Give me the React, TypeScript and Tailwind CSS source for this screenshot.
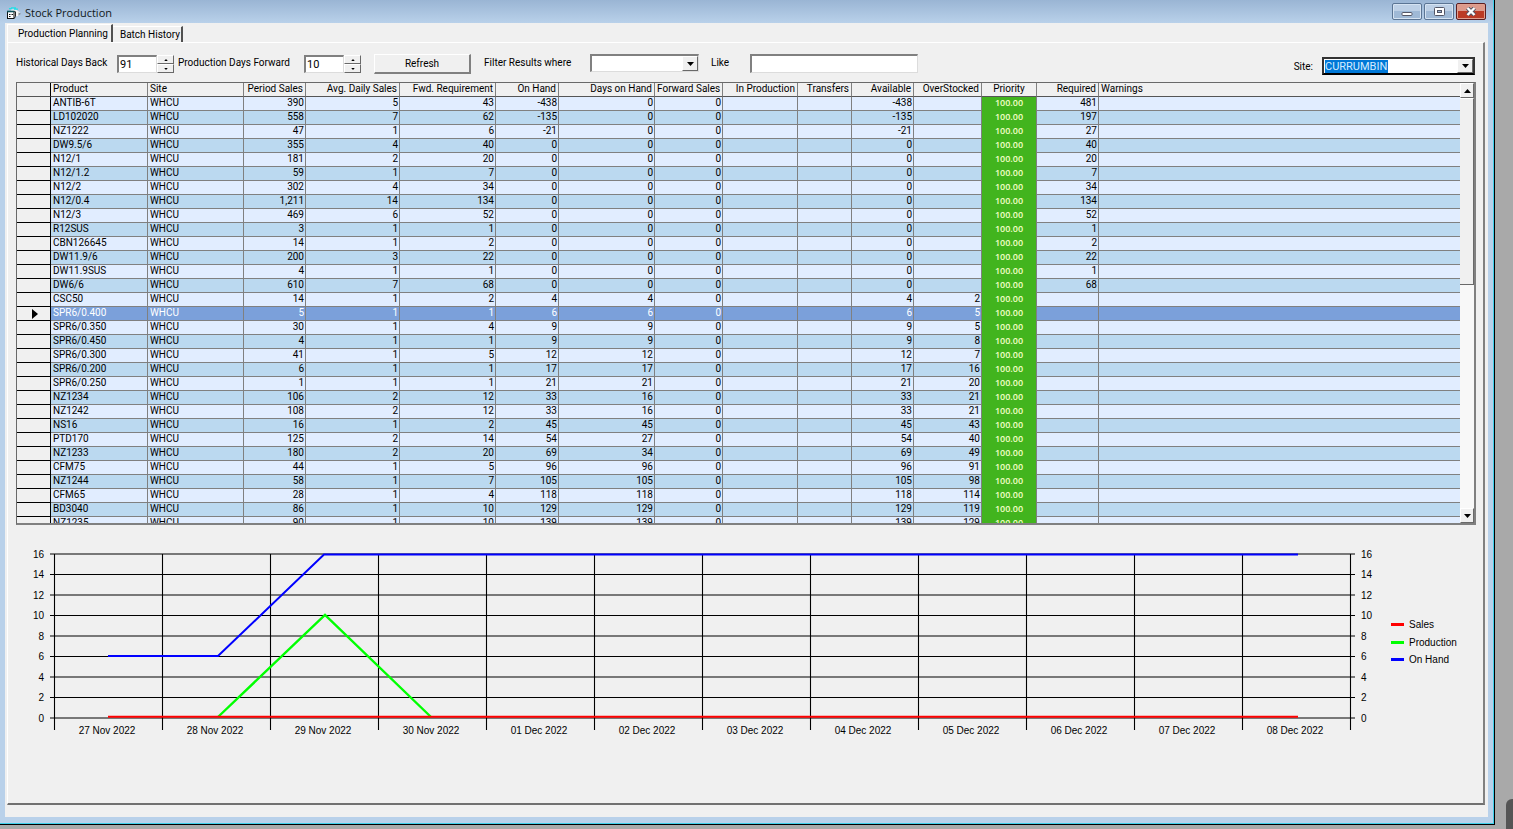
import React, { useState } from 'react';

interface StockRow {
  product: string;
  period: string;
  avg: number;
  fwd: number;
  onHand: number;
  days: number;
  available: number;
  over?: number;
  required?: number;
}

const ROWS: StockRow[] = [
  { product: 'ANTIB-6T', period: '390', avg: 5, fwd: 43, onHand: -438, days: 0, available: -438, required: 481 },
  { product: 'LD102020', period: '558', avg: 7, fwd: 62, onHand: -135, days: 0, available: -135, required: 197 },
  { product: 'NZ1222', period: '47', avg: 1, fwd: 6, onHand: -21, days: 0, available: -21, required: 27 },
  { product: 'DW9.5/6', period: '355', avg: 4, fwd: 40, onHand: 0, days: 0, available: 0, required: 40 },
  { product: 'N12/1', period: '181', avg: 2, fwd: 20, onHand: 0, days: 0, available: 0, required: 20 },
  { product: 'N12/1.2', period: '59', avg: 1, fwd: 7, onHand: 0, days: 0, available: 0, required: 7 },
  { product: 'N12/2', period: '302', avg: 4, fwd: 34, onHand: 0, days: 0, available: 0, required: 34 },
  { product: 'N12/0.4', period: '1,211', avg: 14, fwd: 134, onHand: 0, days: 0, available: 0, required: 134 },
  { product: 'N12/3', period: '469', avg: 6, fwd: 52, onHand: 0, days: 0, available: 0, required: 52 },
  { product: 'R12SUS', period: '3', avg: 1, fwd: 1, onHand: 0, days: 0, available: 0, required: 1 },
  { product: 'CBN126645', period: '14', avg: 1, fwd: 2, onHand: 0, days: 0, available: 0, required: 2 },
  { product: 'DW11.9/6', period: '200', avg: 3, fwd: 22, onHand: 0, days: 0, available: 0, required: 22 },
  { product: 'DW11.9SUS', period: '4', avg: 1, fwd: 1, onHand: 0, days: 0, available: 0, required: 1 },
  { product: 'DW6/6', period: '610', avg: 7, fwd: 68, onHand: 0, days: 0, available: 0, required: 68 },
  { product: 'CSC50', period: '14', avg: 1, fwd: 2, onHand: 4, days: 4, available: 4, over: 2 },
  { product: 'SPR6/0.400', period: '5', avg: 1, fwd: 1, onHand: 6, days: 6, available: 6, over: 5 },
  { product: 'SPR6/0.350', period: '30', avg: 1, fwd: 4, onHand: 9, days: 9, available: 9, over: 5 },
  { product: 'SPR6/0.450', period: '4', avg: 1, fwd: 1, onHand: 9, days: 9, available: 9, over: 8 },
  { product: 'SPR6/0.300', period: '41', avg: 1, fwd: 5, onHand: 12, days: 12, available: 12, over: 7 },
  { product: 'SPR6/0.200', period: '6', avg: 1, fwd: 1, onHand: 17, days: 17, available: 17, over: 16 },
  { product: 'SPR6/0.250', period: '1', avg: 1, fwd: 1, onHand: 21, days: 21, available: 21, over: 20 },
  { product: 'NZ1234', period: '106', avg: 2, fwd: 12, onHand: 33, days: 16, available: 33, over: 21 },
  { product: 'NZ1242', period: '108', avg: 2, fwd: 12, onHand: 33, days: 16, available: 33, over: 21 },
  { product: 'NS16', period: '16', avg: 1, fwd: 2, onHand: 45, days: 45, available: 45, over: 43 },
  { product: 'PTD170', period: '125', avg: 2, fwd: 14, onHand: 54, days: 27, available: 54, over: 40 },
  { product: 'NZ1233', period: '180', avg: 2, fwd: 20, onHand: 69, days: 34, available: 69, over: 49 },
  { product: 'CFM75', period: '44', avg: 1, fwd: 5, onHand: 96, days: 96, available: 96, over: 91 },
  { product: 'NZ1244', period: '58', avg: 1, fwd: 7, onHand: 105, days: 105, available: 105, over: 98 },
  { product: 'CFM65', period: '28', avg: 1, fwd: 4, onHand: 118, days: 118, available: 118, over: 114 },
  { product: 'BD3040', period: '86', avg: 1, fwd: 10, onHand: 129, days: 129, available: 129, over: 119 },
  { product: 'NZ1235', period: '90', avg: 1, fwd: 10, onHand: 139, days: 139, available: 139, over: 129 },
];

const COLUMNS = [
  { label: '', width: 'w-[34px]', align: 'text-left' },
  { label: 'Product', width: 'w-[97px]', align: 'text-left' },
  { label: 'Site', width: 'w-24', align: 'text-left' },
  { label: 'Period Sales', width: 'w-[62px]', align: 'text-right' },
  { label: 'Avg. Daily Sales', width: 'w-[94px]', align: 'text-right' },
  { label: 'Fwd. Requirement', width: 'w-24', align: 'text-right' },
  { label: 'On Hand', width: 'w-[63px]', align: 'text-right' },
  { label: 'Days on Hand', width: 'w-24', align: 'text-right' },
  { label: 'Forward Sales', width: 'w-[68px]', align: 'text-right' },
  { label: 'In Production', width: 'w-[75px]', align: 'text-right' },
  { label: 'Transfers', width: 'w-[54px]', align: 'text-right' },
  { label: 'Available', width: 'w-[62px]', align: 'text-right' },
  { label: 'OverStocked', width: 'w-[68px]', align: 'text-right' },
  { label: 'Priority', width: 'w-[55px]', align: 'text-center' },
  { label: 'Required', width: 'w-[62px]', align: 'text-right' },
  { label: 'Warnings', width: '', align: 'text-left' },
];

const DATES = [
  '27 Nov 2022', '28 Nov 2022', '29 Nov 2022', '30 Nov 2022', '01 Dec 2022', '02 Dec 2022',
  '03 Dec 2022', '04 Dec 2022', '05 Dec 2022', '06 Dec 2022', '07 Dec 2022', '08 Dec 2022',
];

const LEGEND = [
  { label: 'Sales', color: '#ff0000', y: 85 },
  { label: 'Production', color: '#00ff00', y: 103 },
  { label: 'On Hand', color: '#0000ff', y: 120 },
];

const raised = 'bg-[#f0f0f0] border border-t-white border-l-white border-r-[#696969] border-b-[#696969]';
const sunken = 'bg-white border-t-2 border-l-2 border-r border-b border-t-[#808080] border-l-[#808080] border-r-[#dcdcdc] border-b-[#dcdcdc]';

const Arrow = ({ up = false, className = 'w-[7px] h-1' }: { up?: boolean; className?: string }) => (
  <svg viewBox="0 0 7 4" className={className} aria-hidden="true">
    <path d={up ? 'M0 4L3.5 0L7 4Z' : 'M0 0L3.5 4L7 0Z'} fill="#000" />
  </svg>
);

const TitleBar = () => (
  <header className="flex h-[23px] shrink-0 items-start justify-between bg-linear-to-b from-[#9ab5d4] to-[#b9d1ea] pt-[3px] pr-[7px] pl-[6px]">
    <div className="flex items-center gap-1 pt-[2px]">
      <svg viewBox="0 0 15 13" className="h-[13px] w-[15px]" aria-hidden="true">
        <path d="M5 2.5L10 2.5L14 5.5L12 9L6 10Z" fill="#f4f4f4" />
        <path d="M3 1.7H6M5 .9H10M8 2.2H12" stroke="#20e0e8" strokeWidth="1.3" />
        <path d="M12.5 5.5L15 6.8L12.5 8.5Z" fill="#8a8f96" />
        <rect x="1.5" y="4.5" width="6.5" height="7" fill="#fff" stroke="#111" />
        <path d="M1 4.5H8.5" stroke="#0b4f57" strokeWidth="1.6" />
        <path d="M3 7.5H4.5M5.5 7.5H7M3 9.5H4.5" stroke="#111" />
        <path d="M8.5 4L9.5 5V9.5L8.5 11" fill="none" stroke="#222" />
      </svg>
      <h1 className="font-['Open_Sans',sans-serif] text-[11px] leading-4 text-[#101820]">Stock Production</h1>
    </div>
    <div className="flex gap-[2px]">
      <button type="button" aria-label="Minimize" className="flex h-[17px] w-[30px] items-center justify-center rounded-xs border border-[#5b7594] bg-linear-to-b from-[#bdd0e6] from-50% to-[#9fb9d6] to-50% shadow-[inset_0_0_0_1px_#d5e3f2]">
        <svg viewBox="0 0 12 6" className="mt-1 h-[6px] w-3"><rect x="1" y="1.5" width="10" height="3" rx="1" fill="#fff" stroke="#535666" /></svg>
      </button>
      <button type="button" aria-label="Maximize" className="flex h-[17px] w-[30px] items-center justify-center rounded-xs border border-[#5b7594] bg-linear-to-b from-[#bdd0e6] from-50% to-[#9fb9d6] to-50% shadow-[inset_0_0_0_1px_#d5e3f2]">
        <svg viewBox="0 0 11 9" className="h-[9px] w-[11px]">
          <rect x=".5" y=".5" width="10" height="8" rx="1" fill="#fff" stroke="#535666" />
          <rect x="3.5" y="3.5" width="4" height="2" fill="#9fb9d6" stroke="#535666" />
        </svg>
      </button>
      <button type="button" aria-label="Close" className="flex h-[17px] w-[30px] items-center justify-center rounded-xs border border-[#5c1f22] bg-linear-to-b from-[#dd9a8c] from-50% to-[#bb3b25] to-50% shadow-[inset_0_0_0_1px_#e0a090]">
        <svg viewBox="0 0 12 9" className="h-[9px] w-3">
          <path d="M2.5 1L9.5 8M9.5 1L2.5 8" stroke="#535666" strokeWidth="4.2" />
          <path d="M2.5 1L9.5 8M9.5 1L2.5 8" stroke="#fff" strokeWidth="2.4" />
        </svg>
      </button>
    </div>
  </header>
);

interface SpinBoxProps {
  id: string;
  label: string;
  labelWidth: string;
  initial: number;
}

const SpinBox: React.FC<SpinBoxProps> = ({ id, label, labelWidth, initial }) => {
  const [value, setValue] = useState(initial);

  return (
    <div className="flex items-start">
      <label htmlFor={id} className={`${labelWidth} leading-[18px]`}>{label}</label>
      <div className="flex pt-px">
        <input
          id={id}
          value={value}
          onChange={(e) => setValue(Number(e.target.value) || 0)}
          className={`${sunken} h-[18px] w-10 px-px text-[11px]`}
        />
        <div className="flex w-[17px] flex-col">
          <button type="button" aria-label={`Increase ${label}`} onClick={() => setValue(value + 1)} className={`${raised} flex h-[9px] items-center justify-center`}>
            <Arrow up className="h-[2px] w-1" />
          </button>
          <button type="button" aria-label={`Decrease ${label}`} onClick={() => setValue(value - 1)} className={`${raised} flex h-[9px] items-center justify-center`}>
            <Arrow className="h-[2px] w-1" />
          </button>
        </div>
      </div>
    </div>
  );
};

const Toolbar = () => (
  <div className="flex justify-between pr-px pb-[7px]">
    <div className="flex items-start pt-[11px]">
      <SpinBox id="days-back" label="Historical Days Back" labelWidth="w-[101px]" initial={91} />
      <div className="ml-1">
        <SpinBox id="days-forward" label="Production Days Forward" labelWidth="w-[126px]" initial={10} />
      </div>
      <button type="button" className="ml-[13px] h-5 w-[97px] border-t border-l border-r-2 border-b-2 border-t-white border-l-white border-r-[#808080] border-b-[#808080] bg-[#f0f0f0]">
        Refresh
      </button>
      <label htmlFor="filter-field" className="ml-[13px] w-[93px] leading-[18px]">Filter Results where</label>
      <div className={`${sunken} ml-[13px] flex h-[18px] w-[109px] items-center`}>
        <select id="filter-field" className="h-full min-w-0 flex-1 appearance-none outline-none">
          <option></option>
        </select>
        <span className={`${raised} flex h-full w-4 items-center justify-center`}><Arrow /></span>
      </div>
      <label htmlFor="filter-like" className="ml-3 w-[26px] leading-[18px]">Like</label>
      <input id="filter-like" className={`${sunken} ml-[13px] h-[19px] w-42 px-1`} />
    </div>
    <div className="flex items-center gap-[9px] pt-[14px]">
      <label htmlFor="site">Site:</label>
      <div className="flex h-[18px] w-[153px] items-center justify-between border-2 border-t-[#333] border-r-[#333] border-b-black border-l-[#333] bg-white pl-px">
        <select id="site" className="h-[13px] appearance-none bg-[#0078d7] text-[11px] leading-[13px] text-[#d5ecff] outline-none">
          <option>CURRUMBIN</option>
        </select>
        <span className={`${raised} flex h-full w-4 items-center justify-center`}><Arrow /></span>
      </div>
    </div>
  </div>
);

const StockTable = () => {
  const [selected, setSelected] = useState('SPR6/0.400');

  return (
    <div className="flex h-[443px] border border-t-[#696969] border-r-2 border-r-[#808080] border-b-2 border-b-[#808080] border-l-[#696969]">
      <div className="min-w-0 flex-1 overflow-hidden">
        <table className="w-full table-fixed border-separate border-spacing-0">
          <thead>
            <tr className="h-[14px]">
              {COLUMNS.map((col, i) => (
                <th
                  key={i}
                  className={`${col.width} ${col.align} h-[14px] overflow-hidden border-b border-b-[#555] bg-[#f0f0f0] p-0 px-[2px] align-top leading-[11px] font-normal whitespace-nowrap ${i === 0 ? 'border-r border-r-black' : i < 15 ? 'border-r border-r-[#808080]' : ''}`}
                >
                  {col.label}
                </th>
              ))}
            </tr>
          </thead>
          <tbody>
            {ROWS.map((row, i) => {
              const active = row.product === selected;
              const tone = active ? 'bg-[#7ba0da] text-white' : i % 2 ? 'bg-[#bbd9f0]' : 'bg-[#e1edff]';
              const left = 'border-r border-b border-[#808080] p-0 pl-[2px] align-top';
              const right = 'border-r border-b border-[#808080] p-0 pr-px text-right align-top';
              return (
                <tr key={row.product} onClick={() => setSelected(row.product)} className={`${tone} h-[14px] leading-[11px]`}>
                  <td className="border-r border-b border-black bg-[#f0f0f0] p-0">
                    {active && (
                      <svg viewBox="0 0 6 10" className="ml-[15px] h-[10px] w-[6px]" aria-label="Current row">
                        <path d="M0 0L6 5L0 10Z" fill="#000" />
                      </svg>
                    )}
                  </td>
                  <td className={left}>{row.product}</td>
                  <td className={left}>WHCU</td>
                  <td className={right}>{row.period}</td>
                  <td className={right}>{row.avg}</td>
                  <td className={right}>{row.fwd}</td>
                  <td className={right}>{row.onHand}</td>
                  <td className={right}>{row.days}</td>
                  <td className={right}>0</td>
                  <td className={right}></td>
                  <td className={right}></td>
                  <td className={right}>{row.available}</td>
                  <td className={right}>{row.over}</td>
                  <td className="border-r border-r-[#808080] bg-[#42b41e] p-0 text-center align-top font-['Open_Sans',sans-serif] text-[9px] font-semibold text-[#f4ffc8]">100.00</td>
                  <td className={right}>{row.required}</td>
                  <td className="border-b border-[#808080] p-0"></td>
                </tr>
              );
            })}
          </tbody>
        </table>
      </div>
      {/* Vertical scroll bar */}
      <div className="flex w-[14px] flex-col bg-[#f8f8f8]">
        <button type="button" aria-label="Scroll up" className={`${raised} flex h-[15px] items-center justify-center`}><Arrow up /></button>
        <div className="h-[187px] border-t border-r border-b border-t-white border-r-[#696969] border-b-[#696969] bg-[#f0f0f0]" />
        <div className="flex-1" />
        <button type="button" aria-label="Scroll down" className={`${raised} flex h-[15px] items-center justify-center`}><Arrow /></button>
      </div>
    </div>
  );
};

const StockChart = () => {
  // one category every 108 units, two stock units every 20.5
  const ticks = [0, 2, 4, 6, 8, 10, 12, 14, 16];
  const yOf = (v: number) => 178 - v * 10.25;

  return (
    <svg viewBox="0 0 1460 210" className="block h-auto w-full font-['Liberation_Sans',Arial,sans-serif] text-[10px]" role="img" aria-label="Stock forecast">
      {ticks.map((v) => (
        <g key={v}>
          <path d={`M34 ${yOf(v)}H1339`} stroke="#000" strokeWidth="1.1" />
          <text x="28" y={yOf(v) + 3.5} textAnchor="end">{v}</text>
          <text x="1345" y={yOf(v) + 3.5}>{v}</text>
        </g>
      ))}
      {Array.from({ length: 13 }, (_, i) => (
        <path key={i} d={`M${38.5 + i * 108} 14V190`} stroke="#000" strokeWidth="1.1" />
      ))}
      {DATES.map((date, i) => (
        <text key={date} x={91 + i * 108} y="193.5" textAnchor="middle">{date}</text>
      ))}
      <g fill="none" strokeWidth="2">
        <path d="M202 177L309 75L415 177" stroke="#00ff00" strokeWidth="2.4" />
        <path d="M92 116H202L308 14.5H1282" stroke="#0000ff" />
        <path d="M92 176.7H1282" stroke="#ff0000" />
      </g>
      {LEGEND.map((item) => (
        <g key={item.label}>
          <path d={`M1375 ${item.y - 0.5}H1388`} stroke={item.color} strokeWidth="3" />
          <text x="1393" y={item.y + 3}>{item.label}</text>
        </g>
      ))}
    </svg>
  );
};

const App = () => {
  return (
    <div className="flex min-h-screen bg-[#a9a9a9] font-['Roboto','Liberation_Sans',sans-serif] text-[10px] text-black">
      <div className="mb-1 flex min-w-0 flex-1 flex-col border-r border-b border-black">
        <div className="flex flex-1 flex-col border-r border-b border-[#3fd0ea] bg-[#b9d1ea]">
          <TitleBar />
          <main className="mr-[5px] mb-[6px] ml-[5px] flex flex-1 flex-col bg-[#f0f0f0] pr-[3px] pb-3 pl-[2px]">
            <nav className="flex h-[19px] items-end" role="tablist">
              <button type="button" role="tab" aria-selected="true" className="h-[18px] border-t border-r-2 border-l border-t-white border-r-[#505050] border-l-white pr-[3px] pl-[10px]">
                Production Planning
              </button>
              <button type="button" role="tab" aria-selected="false" className="h-4 border-t border-r-2 border-t-white border-r-[#505050] pr-px pl-[7px]">
                Batch History
              </button>
            </nav>
            <section className="flex-1 border-t border-r-2 border-b-2 border-l border-t-white border-r-[#808080] border-b-[#707070] border-l-white pr-[7px] pl-2">
              <Toolbar />
              <StockTable />
              <div className="pt-[15px]">
                <StockChart />
              </div>
            </section>
          </main>
        </div>
      </div>
      <aside className="flex w-[18px] items-end justify-end">
        <div className="h-[30px] w-[7px] rounded-tl-md bg-[#555]" />
      </aside>
    </div>
  );
};

export default App;
